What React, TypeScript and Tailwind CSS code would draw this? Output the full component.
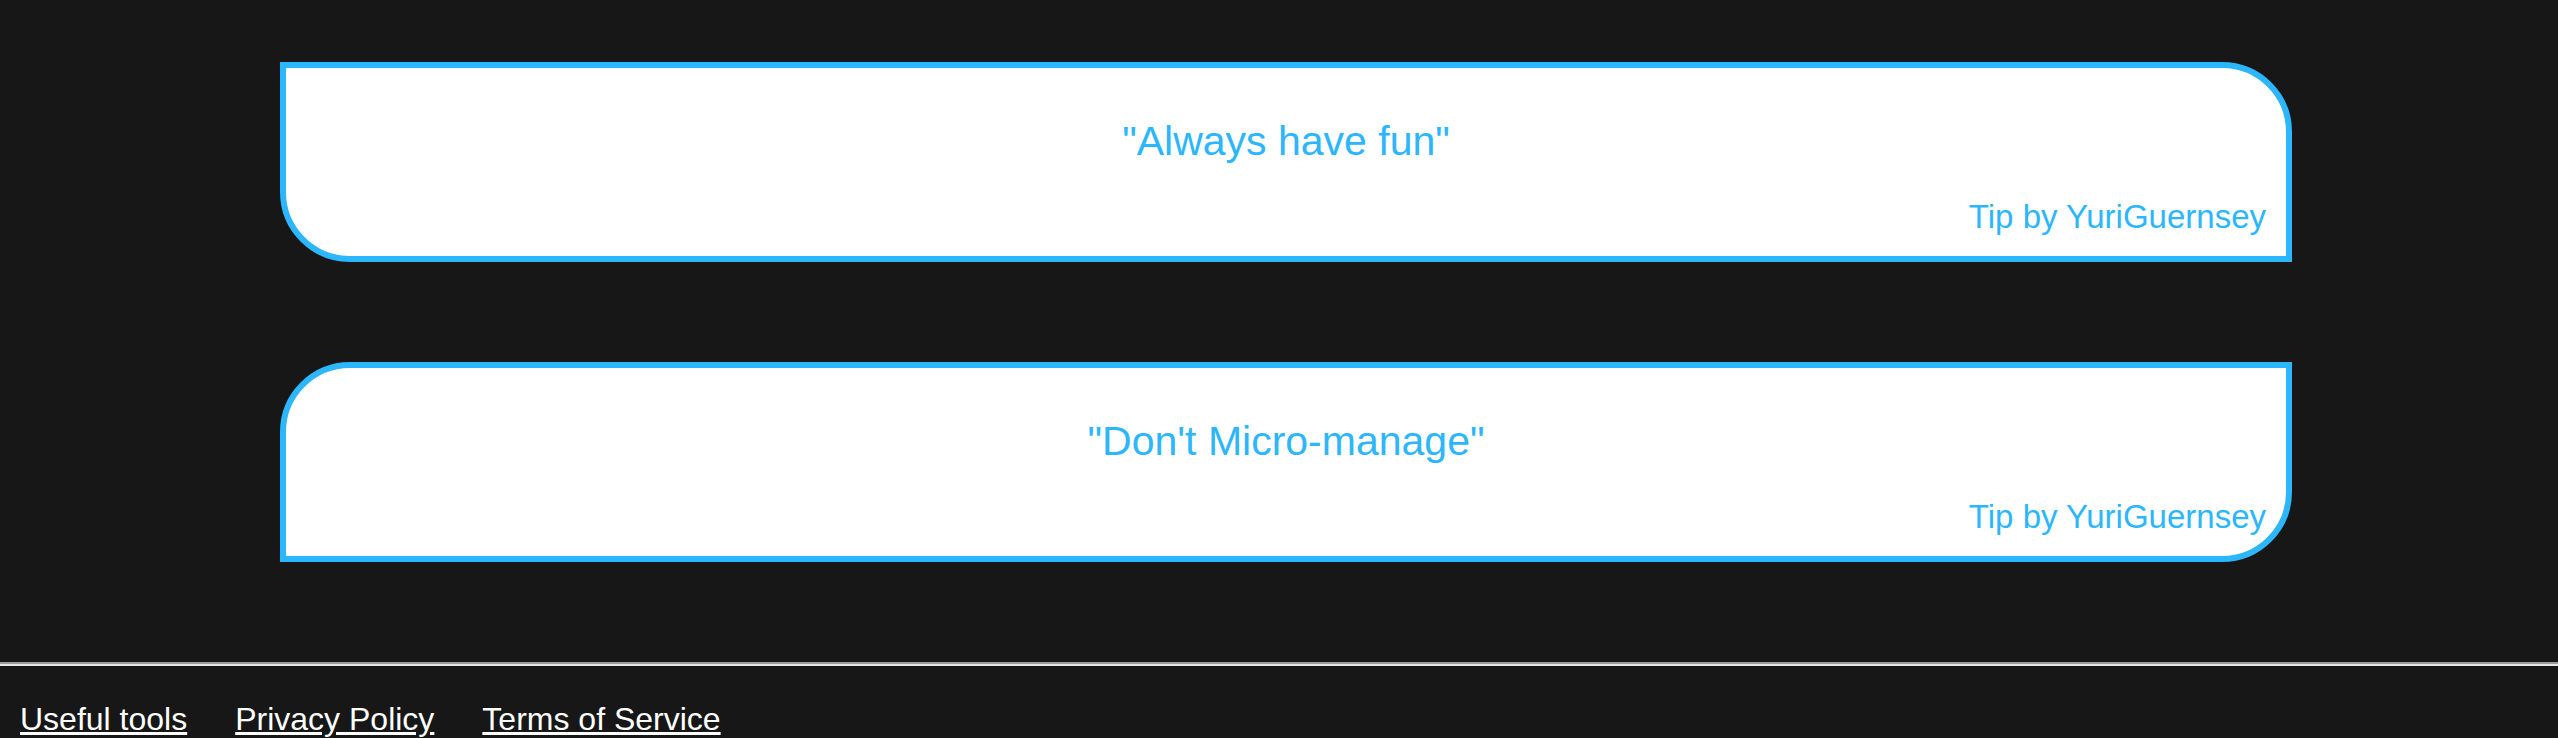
import React from "react";

const tips = [
  { quote: '"Always have fun"', author: "YuriGuernsey", shape: "rounded-tr-[70px] rounded-bl-[70px]" },
  { quote: "\"Don't Micro-manage\"", author: "YuriGuernsey", shape: "rounded-tl-[70px] rounded-br-[70px]" },
];

export default function App() {
  return (
    <div
      className="min-h-screen bg-[#171717]"
      style={{ fontFamily: '"Liberation Sans", Arial, sans-serif' }}
    >
      <main className="flex flex-col gap-[100px] pt-[62px] pl-[280px]">
        {tips.map((t) => (
          <div
            key={t.quote}
            className={`w-[2012px] h-[200px] bg-white border-[6px] border-[#2cb6fd] flex flex-col pt-[50px] pb-[21px] px-[20px] ${t.shape}`}
          >
            <p className="text-center text-[41px] leading-[46px] text-[#2cb6fd]">{t.quote}</p>
            <p className="mt-auto text-right text-[33px] leading-[37px] text-[#2cb6fd]">
              Tip by {t.author}
            </p>
          </div>
        ))}
      </main>
      <hr className="mt-[100px] border-0 border-t-2 border-b-2 border-t-[#9c9c9c] border-b-[#e6e6e6]" />
      <footer className="flex gap-[48px] pl-[20px] pt-[35px] pb-[20px] text-[32px] leading-[37px] text-white">
        <a href="#" className="underline">Useful tools</a>
        <a href="#" className="underline">Privacy Policy</a>
        <a href="#" className="underline">Terms of Service</a>
      </footer>
    </div>
  );
}
